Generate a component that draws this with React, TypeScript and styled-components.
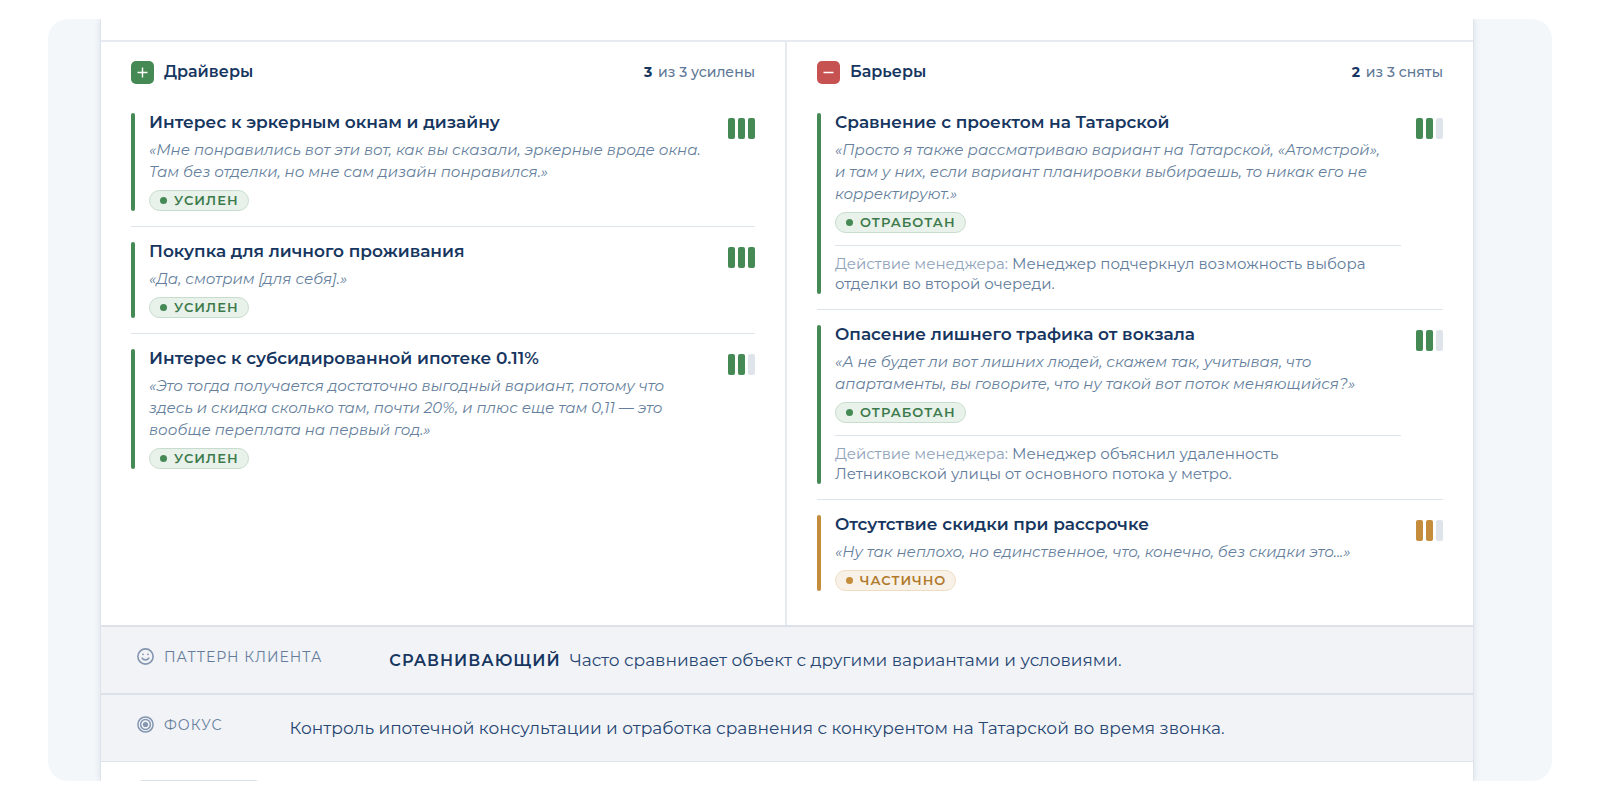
import React from 'react';
import styled, { createGlobalStyle } from 'styled-components';

type Tone = 'green' | 'amber';

interface Factor {
  title: string;
  quote: string;
  status: string;
  tone: Tone;
  level: number;
  action?: string;
}

const tones = {
  green: { solid: '#458955', text: '#3c7a4b', fill: '#e8f1ea', border: '#c7dccc' },
  amber: { solid: '#c48c3b', text: '#b07a2c', fill: '#f8f1e7', border: '#eedcc1' },
};

const GlobalStyle = createGlobalStyle`
  * { box-sizing: border-box; }
  body {
    margin: 0;
    background: #ffffff;
    color: #17365f;
    font-family: Montserrat, "Open Sans", sans-serif;
  }
  h2, h3, p, ul { margin: 0; padding: 0; }
`;

const Page = styled.div`
  padding: 19px 48px;
`;

const Shell = styled.main`
  height: calc(100vh - 38px);
  min-height: 762px;
  padding: 0 78px 0 52px;
  overflow: hidden;
  border-radius: 20px;
  background: #f3f7fa;
`;

const Report = styled.article`
  height: 100%;
  padding-top: 21px;
  border: solid #dfe3eb;
  border-width: 0 1px;
  background: #ffffff;
  box-shadow: 0 0 6px rgba(30, 58, 100, 0.12);
`;

const Columns = styled.div`
  display: grid;
  grid-template-columns: 1fr 1fr;
  border-top: 2px solid #e7eaf0;
`;

const Column = styled.section`
  padding: 18px 30px 34px;

  &:first-child {
    border-right: 2px solid #e7eaf0;
  }
`;

const ColumnHeader = styled.header`
  display: flex;
  align-items: center;
  gap: 10px;
  height: 24px;
  margin-bottom: 29px;
`;

const Badge = styled.span<{ $color: string }>`
  display: grid;
  place-items: center;
  width: 23px;
  height: 23px;
  border-radius: 5px;
  background: ${(p) => p.$color};
`;

const ColumnTitle = styled.h2`
  flex: 1;
  font-size: 16px;
  font-weight: 600;
  line-height: 24px;
`;

const Count = styled.p`
  color: #5f7896;
  font-size: 14px;
  font-weight: 500;
  line-height: 24px;
`;

const CountValue = styled.strong`
  margin-right: 2px;
  color: #17365f;
  font-weight: 700;
`;

const FactorList = styled.ul`
  list-style: none;
`;

const FactorRow = styled.li`
  display: flex;
  gap: 15px;

  & + & {
    margin-top: 15px;
    padding-top: 15px;
    border-top: 1px solid #dde4ec;
  }
`;

const Stripe = styled.span<{ $tone: Tone }>`
  flex: none;
  width: 4px;
  margin-right: -1px;
  border-radius: 2px;
  background: ${(p) => tones[p.$tone].solid};
`;

const FactorBody = styled.div`
  flex: 1;
  min-width: 0;
`;

const FactorTitle = styled.h3`
  margin-bottom: 8px;
  font-size: 17px;
  font-weight: 600;
  line-height: 18px;
`;

const Quote = styled.p`
  margin-bottom: 7px;
  color: #667f9d;
  font-size: 15px;
  font-style: italic;
  line-height: 22px;
  white-space: pre-line;
`;

const Status = styled.span<{ $tone: Tone }>`
  display: flex;
  align-items: center;
  gap: 7px;
  width: fit-content;
  height: 21px;
  padding: 0 9px 0 10px;
  border: 1px solid ${(p) => tones[p.$tone].border};
  border-radius: 11px;
  background: ${(p) => tones[p.$tone].fill};
  color: ${(p) => tones[p.$tone].text};
  font-size: 13px;
  font-weight: 600;
  letter-spacing: 1px;
  line-height: 17px;
  text-transform: uppercase;

  &::before {
    content: '';
    width: 7px;
    height: 7px;
    border-radius: 50%;
    background: ${(p) => tones[p.$tone].solid};
  }
`;

const Action = styled.p`
  margin-top: 12px;
  padding-top: 8px;
  border-top: 1px solid #dde4ec;
  color: #617c9b;
  font-size: 15px;
  line-height: 20px;
  white-space: pre-line;
`;

const ActionLabel = styled.span`
  color: #8fa3ba;
`;

const Meter = styled.div`
  display: flex;
  gap: 3px;
  height: 21px;
  margin-top: 5px;
`;

const MeterBar = styled.span<{ $color: string }>`
  width: 7px;
  border-radius: 2px;
  background: ${(p) => p.$color};
`;

const Strip = styled.section`
  display: flex;
  align-items: center;
  gap: 67px;
  height: 68px;
  padding: 0 36px;
  border-top: 2px solid #dce1e9;
  background: #f1f3f7;
`;

const StripLabel = styled.h3`
  display: flex;
  align-items: center;
  gap: 10px;
  padding-bottom: 7px;
  color: #647c9a;
  font-size: 14px;
  font-weight: 400;
  letter-spacing: 1px;
  line-height: 18px;
  text-transform: uppercase;
`;

const StripText = styled.p`
  color: #274672;
  font-size: 17px;
  line-height: 24px;
`;

const StripTerm = styled.strong`
  margin-right: 9px;
  color: #17365f;
  font-size: 16px;
  font-weight: 600;
  letter-spacing: 1px;
  text-transform: uppercase;
`;

const NextSection = styled.div`
  padding: 18px 36px;
  border-top: 1px solid #dde4ec;
`;

const Chip = styled.div`
  width: 124px;
  height: 28px;
  border: 1px solid #d9e1ec;
  border-radius: 6px;
`;

const drivers: Factor[] = [
  {
    title: 'Интерес к эркерным окнам и дизайну',
    quote: '«Мне понравились вот эти вот, как вы сказали, эркерные вроде окна.\nТам без отделки, но мне сам дизайн понравился.»',
    status: 'Усилен',
    tone: 'green',
    level: 3,
  },
  {
    title: 'Покупка для личного проживания',
    quote: '«Да, смотрим [для себя].»',
    status: 'Усилен',
    tone: 'green',
    level: 3,
  },
  {
    title: 'Интерес к субсидированной ипотеке 0.11%',
    quote: '«Это тогда получается достаточно выгодный вариант, потому что\nздесь и скидка сколько там, почти 20%, и плюс еще там 0,11 — это\nвообще переплата на первый год.»',
    status: 'Усилен',
    tone: 'green',
    level: 2,
  },
];

const barriers: Factor[] = [
  {
    title: 'Сравнение с проектом на Татарской',
    quote: '«Просто я также рассматриваю вариант на Татарской, «Атомстрой»,\nи там у них, если вариант планировки выбираешь, то никак его не\nкорректируют.»',
    status: 'Отработан',
    tone: 'green',
    level: 2,
    action: 'Менеджер подчеркнул возможность выбора\nотделки во второй очереди.',
  },
  {
    title: 'Опасение лишнего трафика от вокзала',
    quote: '«А не будет ли вот лишних людей, скажем так, учитывая, что\nапартаменты, вы говорите, что ну такой вот поток меняющийся?»',
    status: 'Отработан',
    tone: 'green',
    level: 2,
    action: 'Менеджер объяснил удаленность\nЛетниковской улицы от основного потока у метро.',
  },
  {
    title: 'Отсутствие скидки при рассрочке',
    quote: '«Ну так неплохо, но единственное, что, конечно, без скидки это...»',
    status: 'Частично',
    tone: 'amber',
    level: 2,
  },
];

function FactorItem({ factor }: { factor: Factor }) {
  return (
    <FactorRow>
      <Stripe $tone={factor.tone} />
      <FactorBody>
        <FactorTitle>{factor.title}</FactorTitle>
        <Quote>{factor.quote}</Quote>
        <Status $tone={factor.tone}>{factor.status}</Status>
        {factor.action && (
          <Action>
            <ActionLabel>Действие менеджера:</ActionLabel> {factor.action}
          </Action>
        )}
      </FactorBody>
      <Meter role="img" aria-label={`${factor.level} / 3`}>
        {[1, 2, 3].map((n) => (
          <MeterBar key={n} $color={n <= factor.level ? tones[factor.tone].solid : '#dfe4eb'} />
        ))}
      </Meter>
    </FactorRow>
  );
}

interface FactorColumnProps {
  title: string;
  color: string;
  positive?: boolean;
  value: number;
  rest: string;
  items: Factor[];
}

function FactorColumn({ title, color, positive, value, rest, items }: FactorColumnProps) {
  return (
    <Column>
      <ColumnHeader>
        <Badge $color={color}>
          <svg width="11" height="11" viewBox="0 0 11 11" stroke="#ffffff" strokeWidth="1.4" aria-hidden="true">
            <path d={positive ? 'M0.5 5.5h10M5.5 0.5v10' : 'M0.5 5.5h10'} />
          </svg>
        </Badge>
        <ColumnTitle>{title}</ColumnTitle>
        <Count>
          <CountValue>{value}</CountValue> {rest}
        </Count>
      </ColumnHeader>
      <FactorList>
        {items.map((item) => (
          <FactorItem key={item.title} factor={item} />
        ))}
      </FactorList>
    </Column>
  );
}

function SmileIcon() {
  return (
    <svg width="17" height="17" viewBox="0 0 17 17" fill="none" stroke="#8496b0" strokeWidth="1.6" strokeLinecap="round" aria-hidden="true">
      <circle cx="8.5" cy="8.5" r="7.6" />
      <path d="M5.2 10.2c1.6 2.2 5 2.2 6.6 0" />
      <circle cx="6" cy="6.3" r="0.9" fill="#8496b0" stroke="none" />
      <circle cx="11" cy="6.3" r="0.9" fill="#8496b0" stroke="none" />
    </svg>
  );
}

function TargetIcon() {
  return (
    <svg width="17" height="17" viewBox="0 0 17 17" fill="none" stroke="#8496b0" strokeWidth="1.5" aria-hidden="true">
      <circle cx="8.5" cy="8.5" r="7.6" />
      <circle cx="8.5" cy="8.5" r="4.9" />
      <circle cx="8.5" cy="8.5" r="2.6" fill="#8496b0" stroke="none" />
    </svg>
  );
}

export default function App() {
  return (
    <Page>
      <GlobalStyle />
      <Shell>
        <Report>
          <Columns>
            <FactorColumn title="Драйверы" color="#458955" positive value={3} rest="из 3 усилены" items={drivers} />
            <FactorColumn title="Барьеры" color="#c65252" value={2} rest="из 3 сняты" items={barriers} />
          </Columns>
          <Strip>
            <StripLabel>
              <SmileIcon />
              Паттерн клиента
            </StripLabel>
            <StripText>
              <StripTerm>Сравнивающий</StripTerm>
              Часто сравнивает объект с другими вариантами и условиями.
            </StripText>
          </Strip>
          <Strip>
            <StripLabel>
              <TargetIcon />
              Фокус
            </StripLabel>
            <StripText>
              Контроль ипотечной консультации и отработка сравнения с конкурентом на Татарской во время звонка.
            </StripText>
          </Strip>
          <NextSection>
            <Chip />
          </NextSection>
        </Report>
      </Shell>
    </Page>
  );
}
